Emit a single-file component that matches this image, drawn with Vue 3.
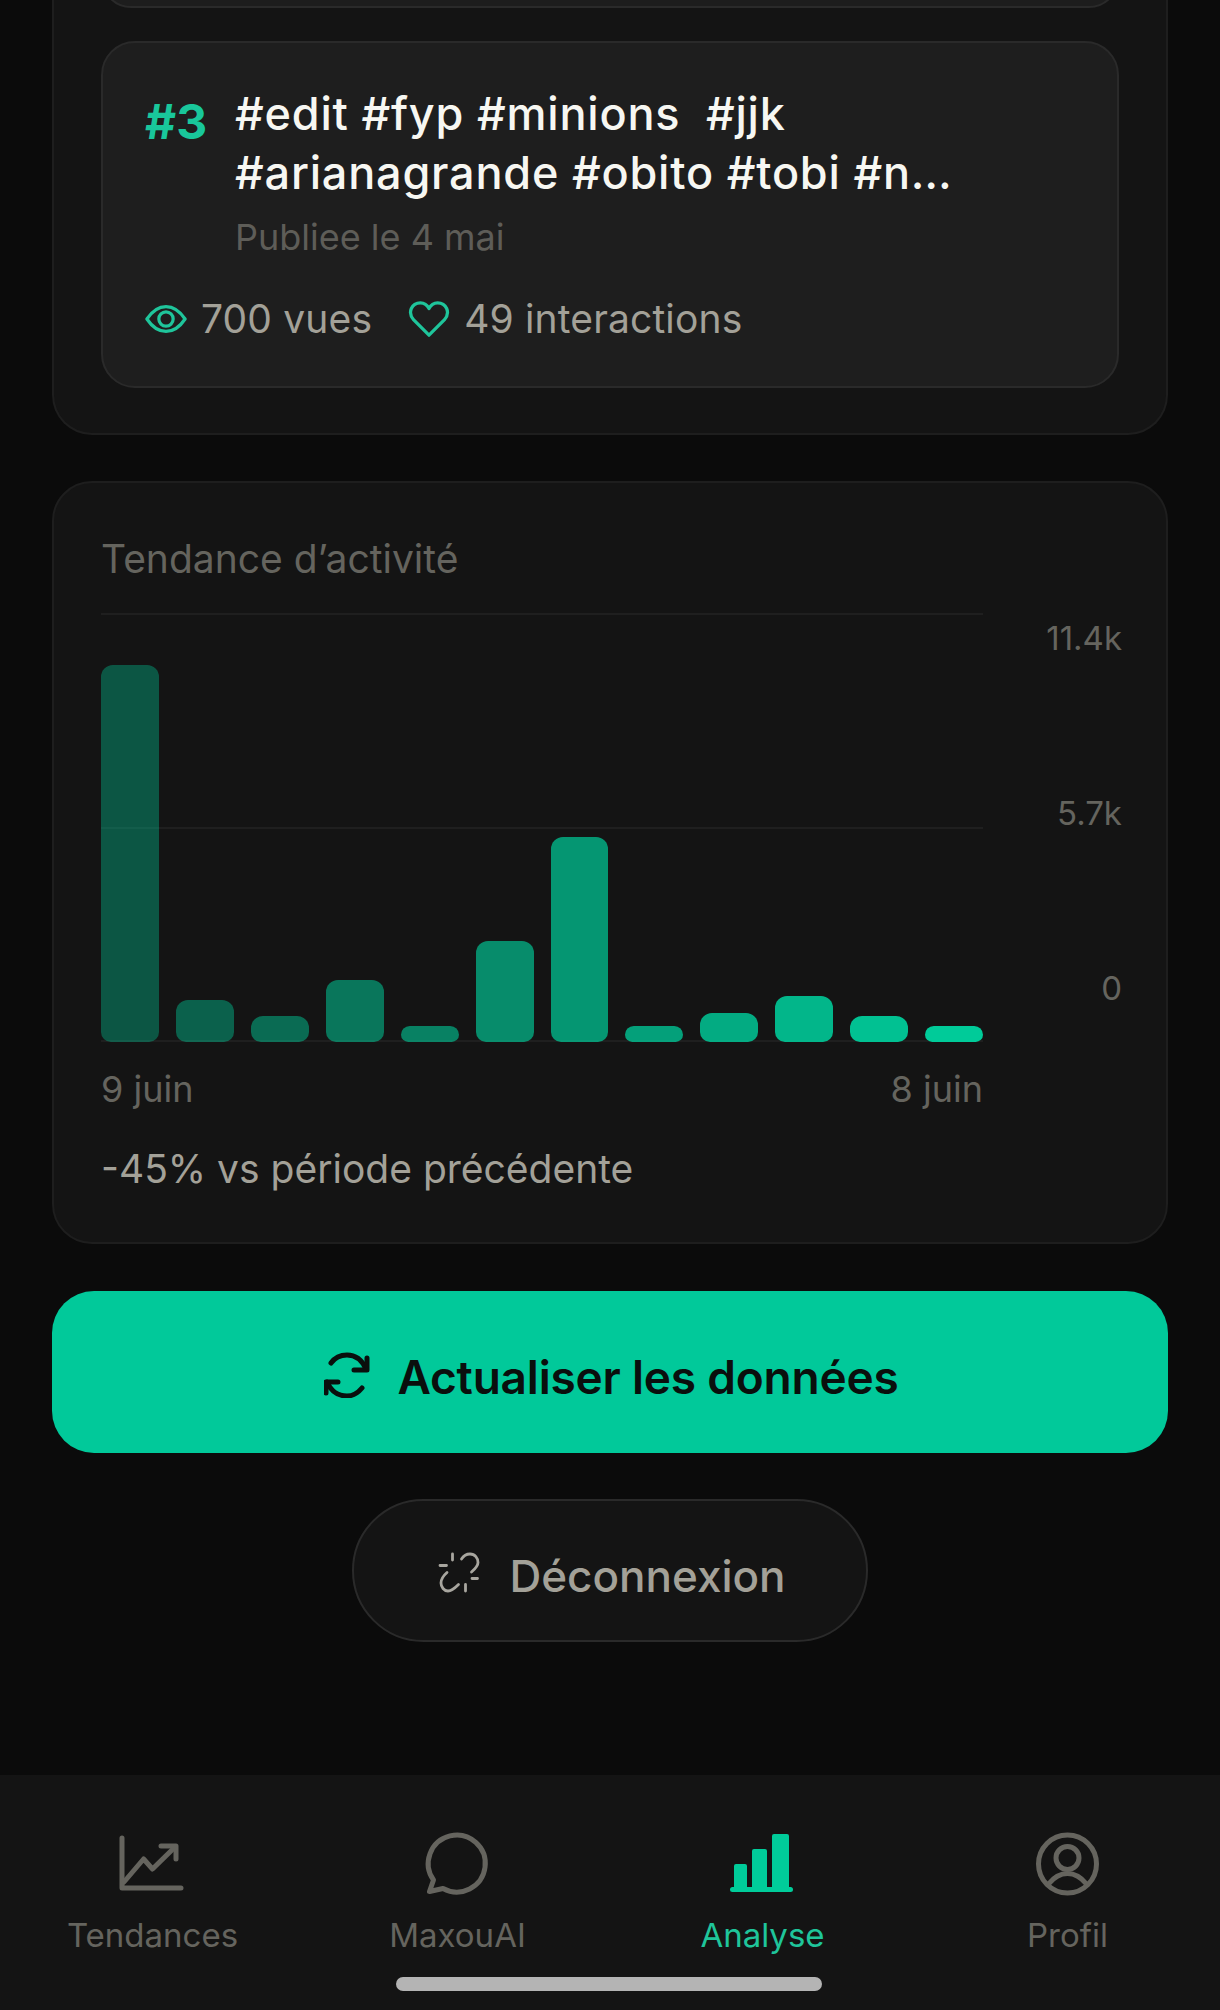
<template>
  <div class="page">
    <main class="content">
      <section class="top-card">
        <div class="prev-sliver"><div class="prev-card"></div></div>
        <article class="post">
          <div class="post-head">
            <span class="rank">#3</span>
            <div class="post-text">
              <p class="tags">#edit #fyp #minions&nbsp; #jjk<br />#arianagrande #obito #tobi #n…</p>
              <p class="date">Publiee le 4 mai</p>
            </div>
          </div>
          <div class="stats">
            <span class="stat">
              <svg class="stat-icon" viewBox="0 0 44 44" fill="none" stroke="#1fc59b" stroke-width="3.4" stroke-linejoin="round">
                <path d="M2 22C8 13 14 9 22 9s14 4 20 13c-6 9-12 13-20 13S8 31 2 22Z" />
                <circle cx="22" cy="22" r="7.5" />
              </svg>
              700 vues
            </span>
            <span class="stat">
              <svg class="stat-icon" viewBox="0 0 44 44" fill="none" stroke="#1fc59b" stroke-width="3.4" stroke-linejoin="round">
                <path d="M22 39 6 23C-1 15 4 5 13 5c4 0 7 2 9 6 2-4 5-6 9-6 9 0 14 10 7 18L22 39Z" />
              </svg>
              49 interactions
            </span>
          </div>
        </article>
      </section>

      <section class="trend-card">
        <h2 class="trend-title">Tendance d’activité</h2>
        <div class="chart-row">
          <div class="chart-main">
            <div class="plot">
              <div class="gridline" style="top: 0"></div>
              <div class="gridline" style="top: 214px"></div>
              <div class="gridline" style="top: 427px"></div>
              <div class="bars">
                <div
                  v-for="(h, i) in bars"
                  :key="i"
                  class="bar"
                  :style="{ height: h + 'px', opacity: 0.36 + i * 0.058 }"
                ></div>
              </div>
            </div>
            <div class="x-labels">
              <span>9 juin</span>
              <span>8 juin</span>
            </div>
          </div>
          <div class="y-labels">
            <span>11.4k</span>
            <span>5.7k</span>
            <span>0</span>
          </div>
        </div>
        <p class="compare">-45% vs période précédente</p>
      </section>

      <button class="refresh">
        <svg class="refresh-icon" viewBox="14 14 46 46" fill="none" stroke="#0a0f0d" stroke-width="5" stroke-linecap="round" stroke-linejoin="round">
          <path d="M21 25C26 18 32 17 37 17 45 17 52 22 56 31" />
          <path d="M57 20V32H44" />
          <path d="M52 50C47 56 42 58 37 58 28 58 21 53 17 44" />
          <path d="M16 55V44H28" />
        </svg>
        <span class="btn-label">Actualiser les données</span>
      </button>

      <button class="logout">
        <svg class="logout-icon" viewBox="12 10 44 44" fill="none" stroke="#a8a69f" stroke-width="2.8" stroke-linecap="round" stroke-linejoin="round">
          <path d="M36.500 18C39 14 42 13 45 13 50 13 53 17 53 21.500 53 25 50 28 46.500 31" />
          <path d="M33.500 43.500C30 47 27 50 23 50 19 50 16 46 16 42 16 38 18 35 22 31.500" />
          <path d="M27.500 13V19M15 24.500H21.500M47 37.500H52.500M40.500 43.500V50" />
        </svg>
        <span class="btn-label">Déconnexion</span>
      </button>
    </main>

    <nav class="tabbar">
      <div class="tab">
        <svg class="tab-icon" viewBox="0 0 72 72" fill="none" stroke="currentColor" stroke-width="5" stroke-linecap="round" stroke-linejoin="round">
          <path d="M5 10V60H64" />
          <path d="M7 54 26.600 31 35.500 41 58 19" />
          <path d="M44 18H59V31" />
        </svg>
        <span>Tendances</span>
      </div>
      <div class="tab">
        <svg class="tab-icon" viewBox="0 0 72 72" fill="none" stroke="currentColor" stroke-width="5" stroke-linejoin="round">
          <path d="M21 60.500A28.500 28.500 0 1 0 11.500 52L7.500 63.500Z" />
        </svg>
        <span>MaxouAI</span>
      </div>
      <div class="tab active">
        <svg class="tab-icon" viewBox="0 0 72 72" fill="#00cc9a">
          <rect x="7" y="36" width="13" height="26" rx="2" />
          <rect x="25" y="21" width="15" height="41" rx="2" />
          <rect x="45" y="6" width="17" height="56" rx="2" />
          <rect x="3" y="59" width="63" height="5" rx="2.500" />
        </svg>
        <span>Analyse</span>
      </div>
      <div class="tab">
        <svg class="tab-icon" viewBox="0 0 72 72" fill="none" stroke="currentColor" stroke-width="5" stroke-linecap="round">
          <circle cx="35.500" cy="36" r="29" />
          <circle cx="35.500" cy="30" r="11.500" />
          <path d="M16.500 56Q25 45.500 35.500 45.500T54.500 56" />
        </svg>
        <span>Profil</span>
      </div>
      <div class="home-indicator"></div>
    </nav>
  </div>
</template>

<script setup>
const bars = [377, 42, 26, 62, 16, 101, 205, 16, 29, 46, 26, 16]
</script>

<style>
html,
body {
  background: #0a0a0a;
}
</style>

<style scoped>
.page {
  width: 1220px;
  height: 2010px;
  overflow: hidden;
  display: flex;
  flex-direction: column;
  background: #0b0b0b;
  font-family: Inter, "Liberation Sans", sans-serif;
}

.content {
  flex: 1;
  padding: 0 52px;
  display: flex;
  flex-direction: column;
}

.top-card {
  height: 435px;
  padding: 0 47px;
  box-sizing: border-box;
  background: #141414;
  border: 2px solid #1e1e1e;
  border-top: 0;
  border-radius: 0 0 40px 40px;
}

.prev-sliver {
  height: 8px;
  margin-bottom: 33px;
  display: flex;
  align-items: flex-end;
  overflow: hidden;
}

.prev-card {
  flex: 1;
  height: 60px;
  flex-shrink: 0;
  box-sizing: border-box;
  background: #1d1d1d;
  border: 2px solid #2a2a2a;
  border-radius: 34px;
}

.post {
  height: 347px;
  box-sizing: border-box;
  padding: 41px 42px 0;
  background: #1e1e1e;
  border: 2px solid #2a2a2a;
  border-radius: 34px;
}

.post-head {
  display: flex;
  gap: 26px;
}

.rank {
  width: 64px;
  margin-top: 16px;
  color: #19c79b;
  font-weight: 700;
  font-size: 48px;
  line-height: 44px;
  white-space: nowrap;
}

.post-text {
  min-width: 0;
}

.tags {
  margin: 0;
  color: #f7f7f2;
  font-weight: 500;
  font-size: 45px;
  line-height: 59px;
  letter-spacing: 0.8px;
  white-space: nowrap;
}

.date {
  margin: 12px 0 0;
  color: #5e5d58;
  font-size: 36px;
  line-height: 46px;
}

.stats {
  margin-top: 37px;
  display: flex;
  gap: 36px;
}

.stat {
  display: flex;
  align-items: center;
  gap: 14px;
  color: #a3a198;
  font-size: 39px;
  line-height: 44px;
  letter-spacing: 0.15px;
}

.stat-icon {
  width: 42px;
  height: 42px;
}

.trend-card {
  margin-top: 46px;
  height: 763px;
  box-sizing: border-box;
  padding: 53px 47px 0;
  background: #141414;
  border: 2px solid #1e1e1e;
  border-radius: 40px;
}

.trend-title {
  margin: 0;
  color: #65645e;
  font-size: 39px;
  font-weight: 400;
  line-height: 46px;
}

.chart-row {
  margin: 31px -3px 0 0;
  display: flex;
  justify-content: space-between;
}

.chart-main {
  width: 882px;
}

.plot {
  position: relative;
  height: 429px;
}

.gridline {
  position: absolute;
  left: 0;
  right: 0;
  height: 2px;
  background: #1f1f1f;
}

.bars {
  position: relative;
  height: 429px;
  display: flex;
  align-items: flex-end;
  gap: 17px;
}

.bar {
  flex: 1;
  background: #00cc9a;
  border-radius: 12px 12px 10px 10px;
}

.x-labels {
  margin-top: 25px;
  display: flex;
  justify-content: space-between;
  color: #65645e;
  font-size: 36px;
  line-height: 44px;
}

.y-labels {
  height: 394px;
  margin: 3px 0 0;
  display: flex;
  flex-direction: column;
  justify-content: space-between;
  align-items: flex-end;
  color: #65645e;
  font-size: 33px;
  line-height: 44px;
}

.compare {
  margin: 36px 0 0;
  color: #a3a198;
  font-size: 39px;
  line-height: 44px;
}

.refresh {
  margin-top: 47px;
  height: 162px;
  width: 100%;
  flex: none;
  display: flex;
  align-items: center;
  justify-content: center;
  gap: 30px;
  border: 0;
  border-radius: 42px;
  background: #01c99a;
  color: #0a0f0d;
  font-family: Inter, sans-serif;
  font-weight: 600;
  font-size: 46px;
  letter-spacing: -0.2px;
}

.btn-label {
  margin-top: 10px;
}

.refresh-icon {
  width: 46px;
  height: 46px;
  margin: 5px -3px 0 3px;
}

.logout {
  align-self: center;
  margin-top: 46px;
  width: 516px;
  height: 143px;
  flex: none;
  display: flex;
  align-items: center;
  justify-content: center;
  gap: 31px;
  background: #141414;
  border: 2px solid #2a2a2a;
  border-radius: 72px;
  color: #a3a198;
  font-family: Inter, sans-serif;
  font-weight: 500;
  font-size: 44px;
}

.logout-icon {
  width: 44px;
  height: 44px;
  margin: 4px -3px 0 3px;
}

.tabbar {
  position: relative;
  height: 235px;
  flex: none;
  display: grid;
  grid-template-columns: repeat(4, 1fr);
  padding: 53px 0 0;
  box-sizing: border-box;
  background: #141414;
}

.tab {
  display: flex;
  flex-direction: column;
  align-items: center;
  gap: 13px;
  color: #65645e;
  font-size: 33px;
  line-height: 44px;
}

.tab.active {
  color: #1fc59b;
}

.tab-icon {
  width: 72px;
  height: 72px;
}

.home-indicator {
  position: absolute;
  left: 396px;
  bottom: 19px;
  width: 426px;
  height: 14px;
  border-radius: 7px;
  background: #b4b4b4;
}
</style>
